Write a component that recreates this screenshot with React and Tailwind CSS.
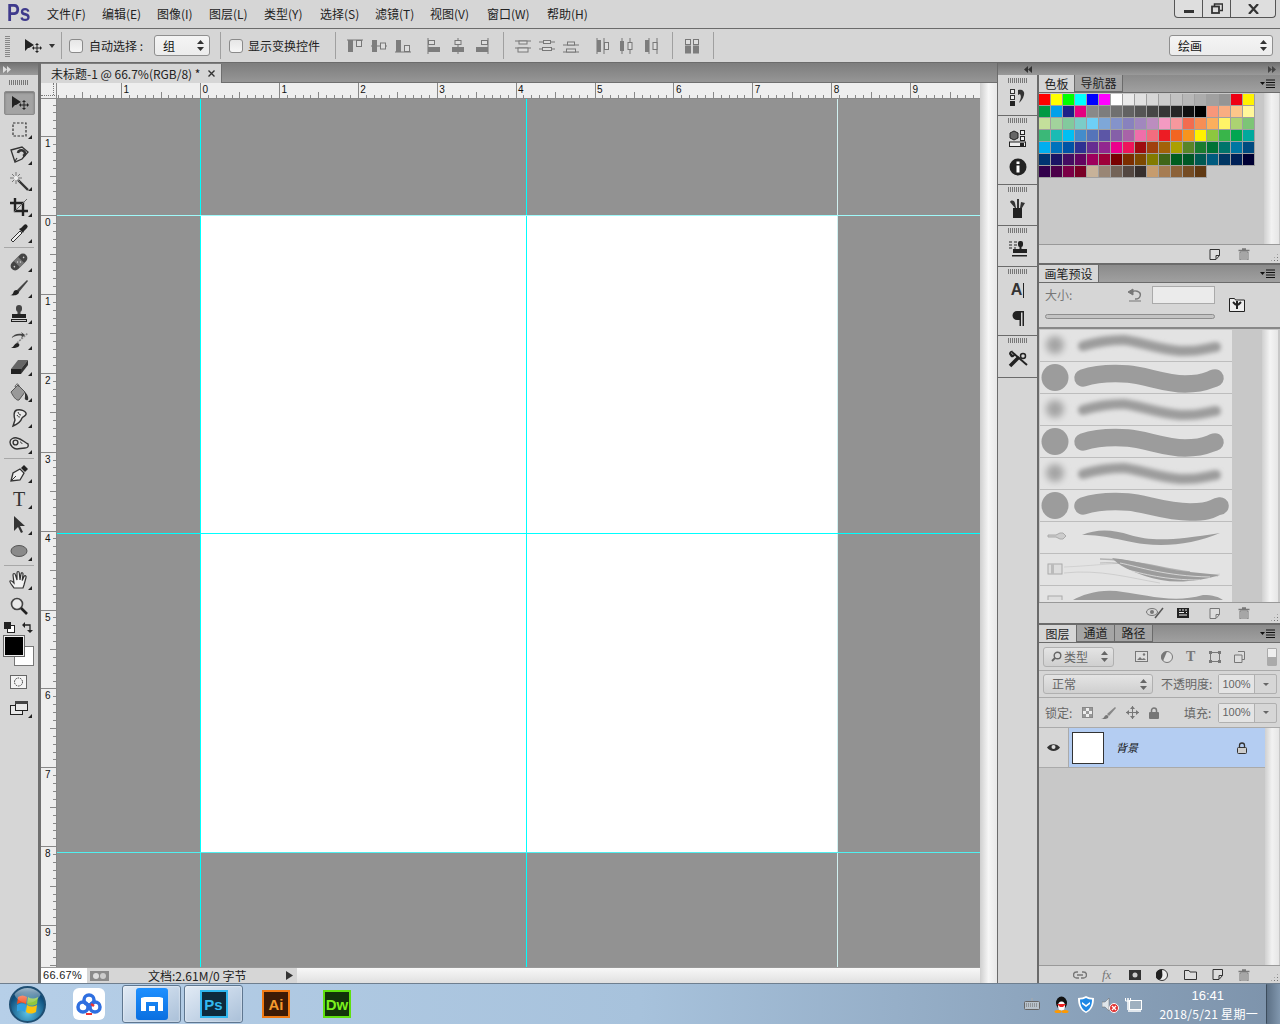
import React from "react";

const cjk = "font-['Noto_Sans_CJK_SC','Liberation_Sans',sans-serif]";

function Ico({ w = 22, h = 22, vb, className = "", children }) {
  return (
    <svg width={w} height={h} viewBox={vb || `0 0 ${w} ${h}`} className={"block shrink-0 " + className}>
      {children}
    </svg>
  );
}

const MoveIcon = () => (
  <Ico w={20} h={16}>
    <path d="M2 1v12l3-3 1 0 5-3z" fill="#222" />
    <path d="M14 6v8M10 10h8" stroke="#222" strokeWidth="1" />
    <path d="M14 5l-2 2h4zM14 15l-2-2h4zM9 10l2-2v4zM19 10l-2-2v4z" fill="#222" />
  </Ico>
);

const tools = {
  marquee: <rect x="5" y="5" width="13" height="13" fill="none" stroke="#333" strokeWidth="1.200" strokeDasharray="2.500 1.500" />,
  lasso: (
    <g fill="none" stroke="#333" strokeWidth="1.300">
      <path d="M3 6l11-3 6 5-6 7-7 3z" />
      <path d="M10 9a3.500 3 0 1 1 5 3" strokeWidth="2.600" />
      <path d="M7 17l2-3" strokeWidth="1.200" />
    </g>
  ),
  wand: (
    <g>
      <path d="M10 10l10 10" stroke="#333" strokeWidth="2.400" />
      <path d="M8 2v12M2 8h12M4 4l8 8M12 4l-8 8" stroke="#777" strokeWidth="1" />
      <circle cx="8" cy="8" r="2.200" fill="#eee" />
    </g>
  ),
  crop: (
    <g fill="none" stroke="#222" strokeWidth="2.400">
      <path d="M7 2v13h13" />
      <path d="M2 7h13v13" />
      <path d="M6 16L19 3" stroke="#666" strokeWidth="1" />
    </g>
  ),
  dropper: (
    <g>
      <path d="M4 19l-1-1 9-9 2 2-9 9z" fill="#eee" stroke="#333" strokeWidth="1" />
      <path d="M11 7l4 4 1-2 3-3a2 2 0 0 0-3-3l-3 3z" fill="#222" />
    </g>
  ),
  heal: (
    <g transform="rotate(-45 11 11)">
      <rect x="1" y="6.500" width="20" height="9" rx="4.500" fill="#444" />
      <rect x="8" y="6.500" width="6" height="9" fill="#777" />
      <circle cx="4.500" cy="11" r=".8" fill="#ccc" />
      <circle cx="17.500" cy="11" r=".8" fill="#ccc" />
      <circle cx="10" cy="10" r=".6" fill="#ddd" />
      <circle cx="12" cy="12" r=".6" fill="#ddd" />
    </g>
  ),
  brush: (
    <g>
      <path d="M9 13L19 3l1 1-9 11z" fill="#444" />
      <path d="M2 18c3 0 3-2 4-4 2-2 5-1 5 1 0 3-5 4-9 3z" fill="#222" />
    </g>
  ),
  stamp: (
    <g fill="#222">
      <rect x="8" y="2" width="6" height="7" rx="3" fill="#444" />
      <rect x="9.500" y="8" width="3" height="3" fill="#444" />
      <rect x="4" y="11" width="14" height="4" />
      <rect x="3" y="16" width="16" height="3" />
      <rect x="4" y="17" width="14" height="1" fill="#ccc" />
    </g>
  ),
  history: (
    <g>
      <path d="M9 14L20 4" stroke="#888" strokeWidth="1.500" strokeDasharray="2 1" />
      <path d="M3 9c3-4 7-5 11-4l-1-2 4 3-4 3 1-2c-4-1-7 0-11 2z" fill="#444" />
      <path d="M3 19c3-1 3-4 6-5 3 0 3 3 1 4-2 1-4 1-7 1z" fill="#222" />
    </g>
  ),
  eraser: (
    <g>
      <path d="M3 14l7-9h10l-7 9z" fill="#666" />
      <path d="M3 14h10v5H3z" fill="#222" />
      <path d="M13 14l7-9v5l-7 9z" fill="#333" />
    </g>
  ),
  bucket: (
    <g>
      <path d="M3 11l7-7 7 7-6 8c-3 1-6-4-8-8z" fill="#999" stroke="#555" strokeWidth="1" />
      <path d="M7 6c1-4 4-4 4 0" fill="none" stroke="#555" strokeWidth="1" />
      <path d="M17 11c2 2 4 5 3 8-2 1-4-1-3-3z" fill="#333" />
    </g>
  ),
  smudge: (
    <g fill="#e8e8e8" stroke="#333" strokeWidth="1.400">
      <path d="M5 19l2-6c-1-3-2-9 2-10 4-1 8 1 9 3 1 3-3 3-4 5-1 3-4 6-9 8z" />
      <path d="M10 5c1 2 1 3 3 3M9 8c1 2 2 2 3 2" fill="none" strokeWidth="1" />
    </g>
  ),
  dodge: (
    <g fill="none" stroke="#333" strokeWidth="1.400">
      <path d="M2 9c0-3 4-5 7-4 5 1 7 4 11 6 1 3-1 4-3 4-4 0-5 1-8 1-3 0-7-3-7-7z" fill="#e0e0e0" />
      <circle cx="7.500" cy="9.500" r="2.400" />
      <path d="M12 9c1 0 2 1 2 2" strokeWidth="1" />
    </g>
  ),
  pen: (
    <g>
      <path d="M3 19l2-8 7-4 4 4-4 7z" fill="#eee" stroke="#333" strokeWidth="1.300" />
      <path d="M3 19l5-5" stroke="#333" strokeWidth="1" />
      <path d="M13 6l3-3 4 4-3 3z" fill="#222" />
    </g>
  ),
  path: <path d="M6 2v15l4-4 3 6 2-1-3-6h5z" fill="#333" />,
  ellipse: <ellipse cx="11" cy="11" rx="8" ry="5.500" fill="#8a8a8a" stroke="#555" strokeWidth="1" />,
  hand: (
    <g fill="#f2f2f2" stroke="#333" strokeWidth="1.200">
      <path d="M6 19c-2-3-5-6-4-7s3 1 4 2L5 6c0-2 2-2 2.500 0L9 11 9 4c0-2 2-2 2.300 0l.7 7 1-6c.3-2 2.300-1.500 2 .5l-.8 6 1.800-4c1-1.500 2.500-.5 2 1L16 16l-1 3z" />
    </g>
  ),
  zoom: (
    <g>
      <circle cx="9" cy="9" r="5.500" fill="#e8e8e8" stroke="#444" strokeWidth="1.600" />
      <path d="M13 13l6 6" stroke="#222" strokeWidth="2.600" />
    </g>
  ),
};

function Corner() {
  return <span className="absolute right-[6px] bottom-[3px] w-0 h-0 border-l-[4px] border-l-transparent border-b-[4px] border-b-[#222]" />;
}

function Tool({ k, corner = true, children }) {
  return (
    <div className="relative h-[26px] w-[38px] flex items-center justify-center">
      {children || <Ico>{tools[k]}</Ico>}
      {corner && <Corner />}
    </div>
  );
}

const Sep = () => <div className="h-px w-[30px] bg-[#a8a8a8] mx-auto" />;

function Grip({ className = "" }) {
  return <div className={"w-[20px] h-[5px] bg-[repeating-linear-gradient(90deg,#777_0,#777_1px,transparent_1px,transparent_2px)] " + className} />;
}

function CollapseBar({ children, className = "" }) {
  return <div className={"h-[12px] bg-gradient-to-b from-[#737373] to-[#9a9a9a] flex items-center text-[#d8d8d8] " + className}>{children}</div>;
}

const Tri2 = ({ left, dark }) => (
  <svg width="8" height="7" viewBox="0 0 8 7" className="block">
    {left ? <path d="M4 0v7L0 3.500zM8 0v7L4 3.500z" fill="#333" /> : <path d="M0 0v7l4-3.500zM4 0v7l4-3.500z" fill={dark ? "#444" : "#ddd"} />}
  </svg>
);

function LeftTools() {
  return (
    <div className="w-[38px] shrink-0 bg-[#d6d6d6] flex flex-col">
      <CollapseBar className="pl-[3px]"><Tri2 /></CollapseBar>
      <div className="h-[15px] flex items-center justify-center"><Grip /></div>
      <div className="mx-[4px] w-[31px] h-[24px] mt-[1px] mb-px bg-[#a3a3a3] rounded-[2px] border border-[#8c8c8c] flex items-center justify-center shadow-[inset_0_1px_2px_#777]">
        <MoveIcon />
      </div>
      <div className="flex flex-col w-[38px]">
        <Tool k="marquee" />
        <Tool k="lasso" />
        <Tool k="wand" />
        <Tool k="crop" />
        <Tool k="dropper" />
        <div className="h-[3px] flex items-center"><Sep /></div>
        <Tool k="heal" />
        <Tool k="brush" />
        <Tool k="stamp" />
        <Tool k="history" />
        <Tool k="eraser" />
        <Tool k="bucket" />
        <Tool k="smudge" />
        <Tool k="dodge" />
        <div className="h-[3px] flex items-center"><Sep /></div>
        <Tool k="pen" />
        <Tool>
          <span className="font-['Liberation_Serif',serif] text-[20px] leading-none text-[#333]">T</span>
        </Tool>
        <Tool k="path" />
        <Tool k="ellipse" />
        <div className="h-[3px] flex items-center"><Sep /></div>
        <Tool k="hand" />
        <Tool k="zoom" corner={false} />
      </div>
      <div className="h-[16px] flex items-center justify-between pl-[4px] pr-[5px] w-[38px]">
        <svg width="11" height="11" viewBox="0 0 11 11" className="block"><rect x="3.500" y="3.500" width="7" height="7" fill="#fff" stroke="#222"/><rect x="0" y="0" width="7" height="7" fill="#222"/></svg>
        <svg width="11" height="11" viewBox="0 0 11 11" className="block"><path d="M1 3h7v6" fill="none" stroke="#222" strokeWidth="1.300"/><path d="M3 0v6L0 3zM5 8h6l-3 3z" fill="#222"/></svg>
      </div>
      <div className="relative h-[34px] w-[38px]">
        <div className="absolute left-[14px] top-[11px] w-[20px] h-[20px] bg-white border border-[#777]" />
        <div className="absolute left-[4px] top-[1px] w-[20px] h-[20px] bg-black border border-[#eee] outline outline-[#666]" />
      </div>
      <div className="h-[26px] w-[38px] flex items-center justify-center">
        <svg width="18" height="14" viewBox="0 0 18 14" className="block"><rect x=".5" y=".5" width="16" height="13" fill="#f4f4f4" stroke="#666"/><circle cx="8.500" cy="7" r="4" fill="none" stroke="#333" strokeDasharray="1.500 1"/></svg>
      </div>
      <Tool>
        <svg width="18" height="14" viewBox="0 0 18 14" className="block"><rect x=".5" y="4.500" width="12" height="9" fill="#e8e8e8" stroke="#222"/><rect x="5.500" y=".5" width="12" height="9" fill="#e8e8e8" stroke="#222"/><rect x="5" y="0" width="13" height="3" fill="#444"/></svg>
      </Tool>
    </div>
  );
}

const menus = ["文件(F)", "编辑(E)", "图像(I)", "图层(L)", "类型(Y)", "选择(S)", "滤镜(T)", "视图(V)", "窗口(W)", "帮助(H)"];
const menuX = [47, 55, 55, 52, 55, 56, 55, 55, 57, 60];

function MenuBar() {
  return (
    <div className="h-[29px] shrink-0 bg-[#d6d6d6] border-b border-[#6b6b6b] flex items-start relative">
      <div className="w-[47px] shrink-0 pl-[7px] pt-[1px]">
        <span className="inline-block origin-left scale-x-[.8] font-['Liberation_Sans',sans-serif] font-bold text-[24px] leading-[24px] text-[#3f3a8c]">Ps</span>
      </div>
      <div className="flex h-[28px] items-center">
        {menus.map((m, i) => (
          <span key={m} className="text-[12px] text-[#222] whitespace-nowrap" style={{ width: i < 9 ? menuX[i + 1] : 50 }}>{m}</span>
        ))}
      </div>
      <div className="ml-auto mr-[4px] flex h-[18px] w-[102px] border-l border-r border-b border-[#555] rounded-b-[4px] bg-[#dedede]">
        <div className="w-[28px] flex items-center justify-center border-r border-[#555]"><div className="w-[10px] h-[3px] bg-[#333] mt-[6px]" /></div>
        <div className="w-[28px] flex items-center justify-center border-r border-[#555]">
          <svg width="12" height="11" viewBox="0 0 12 11" className="block"><path d="M3.500 3V.9h8v6.500H9" fill="none" stroke="#333" strokeWidth="1.500"/><rect x="1" y="3.500" width="7" height="6.500" fill="none" stroke="#333" strokeWidth="1.800"/></svg>
        </div>
        <div className="flex-1 flex items-center justify-center">
          <svg width="11" height="10" viewBox="0 0 11 10" className="block"><path d="M1 0l9 10M10 0L1 10" stroke="#333" strokeWidth="2.200"/></svg>
        </div>
      </div>
    </div>
  );
}

function OptCheck({ className = "" }) {
  return <span className={"block w-[14px] h-[14px] shrink-0 rounded-[3px] border border-[#8a8a8a] bg-gradient-to-b from-[#e6e6e6] to-[#f6f6f6] " + className} />;
}

const UpDown = ({ c = "#333" }) => (
  <svg width="7" height="11" viewBox="0 0 7 11" className="block shrink-0"><path d="M3.500 0L7 4H0zM3.500 11L0 7h7z" fill={c}/></svg>
);

const OSep = ({ className = "" }) => <div className={"w-px h-[27px] bg-[#a0a0a0] shrink-0 " + className} />;

function Align({ v }) {
  const g = "#7d7d7d";
  const L = "#777";
  const map = {
    t: <g><path d="M1 2h16" stroke={L}/><rect x="2" y="2" width="5" height="12" fill={g}/><rect x="10.500" y="2.500" width="5" height="6" fill="#ddd" stroke={L}/></g>,
    c: <g><path d="M1 8h16" stroke={L}/><rect x="2" y="2" width="5" height="12" fill={g}/><rect x="10.500" y="5" width="5" height="6" fill="#ddd" stroke={L}/></g>,
    b: <g><path d="M1 14h16" stroke={L}/><rect x="2" y="2" width="5" height="12" fill={g}/><rect x="10.500" y="7.500" width="5" height="6" fill="#ddd" stroke={L}/></g>,
    l: <g><path d="M3 0v16" stroke={L}/><rect x="3" y="9" width="12" height="5" fill={g}/><rect x="3.500" y="2.500" width="6" height="4" fill="#ddd" stroke={L}/></g>,
    m: <g><path d="M9 0v16" stroke={L}/><rect x="3" y="9" width="12" height="5" fill={g}/><rect x="6" y="2.500" width="6" height="4" fill="#ddd" stroke={L}/></g>,
    r: <g><path d="M15 0v16" stroke={L}/><rect x="3" y="9" width="12" height="5" fill={g}/><rect x="8.500" y="2.500" width="6" height="4" fill="#ddd" stroke={L}/></g>,
    dt: <g><path d="M1 3h16M1 10h16" stroke={L}/><rect x="5" y="3" width="8" height="3" fill="#ddd" stroke={L}/><rect x="4" y="10" width="10" height="4" fill="#ddd" stroke={L}/></g>,
    dc: <g><path d="M1 4h16M1 11h16" stroke={L}/><rect x="5.500" y="2.500" width="7" height="3" fill="#ddd" stroke={L}/><rect x="4.500" y="9.500" width="9" height="3" fill="#ddd" stroke={L}/></g>,
    db: <g><path d="M1 7h16M1 14h16" stroke={L}/><rect x="5.500" y="4" width="7" height="3" fill="#ddd" stroke={L}/><rect x="4.500" y="11" width="9" height="3" fill="#ddd" stroke={L}/></g>,
    hl: <g><path d="M3 0v16M10 0v16" stroke={L}/><rect x="3" y="2" width="4" height="12" fill={g}/><rect x="10.500" y="4.500" width="4" height="7" fill="#ddd" stroke={L}/></g>,
    hc: <g><path d="M4 0v16M12 0v16" stroke={L}/><rect x="2" y="3" width="4" height="10" fill={g}/><rect x="10" y="4.500" width="4" height="7" fill="#ddd" stroke={L}/></g>,
    hr: <g><path d="M7 0v16M15 0v16" stroke={L}/><rect x="3" y="2" width="4" height="12" fill={g}/><rect x="11" y="4.500" width="4" height="7" fill="#ddd" stroke={L}/></g>,
    auto: <g><rect x="2.500" y="1.500" width="5" height="5" fill="#ddd" stroke={L}/><rect x="10.500" y="1.500" width="5" height="5" fill="#ddd" stroke={L}/><rect x="2" y="7.500" width="6" height="8" fill={g}/><rect x="10" y="7.500" width="6" height="8" fill={g}/></g>,
  };
  return <svg width="18" height="16" viewBox="0 0 18 16" className="block shrink-0">{map[v]}</svg>;
}

function AGroup({ items, className = "" }) {
  return (
    <div className={"flex gap-[6px] " + className}>
      {items.map((a) => <Align key={a} v={a} />)}
    </div>
  );
}

function OptSelect({ w, text }) {
  return (
    <div className={`h-[21px] rounded-[3px] border border-[#8f8f8f] bg-gradient-to-b from-[#f4f4f4] to-[#ececec] flex items-center justify-between pl-[8px] pr-[5px] text-[12px] text-[#111] shrink-0 ${w}`}>
      <span>{text}</span>
      <UpDown />
    </div>
  );
}

function OptionsBar() {
  return (
    <div className="h-[34px] shrink-0 bg-[#d6d6d6] border-b border-[#6b6b6b] flex items-center text-[12px] text-[#222]">
      <div className="ml-[5px] w-[5px] h-[22px] bg-[repeating-linear-gradient(0deg,#888_0,#888_1px,transparent_1px,transparent_2px)]" />
      <div className="ml-[13px]"><MoveIcon /></div>
      <svg width="6" height="4" viewBox="0 0 6 4" className="block ml-[6px]"><path d="M0 0h6L3 4z" fill="#333"/></svg>
      <OSep className="ml-[6px]" />
      <OptCheck className="ml-[7px]" />
      <span className="ml-[6px] w-[65px] whitespace-nowrap">自动选择 :</span>
      <OptSelect w="w-[56px]" text="组" />
      <OSep className="ml-[10px]" />
      <OptCheck className="ml-[8px]" />
      <span className="ml-[5px] w-[72px] whitespace-nowrap">显示变换控件</span>
      <OSep className="ml-[15px]" />
      <AGroup className="ml-[10px]" items={["t", "c", "b"]} />
      <AGroup className="ml-[13px]" items={["l", "m", "r"]} />
      <OSep className="ml-[12px]" />
      <AGroup className="ml-[10px]" items={["dt", "dc", "db"]} />
      <AGroup className="ml-[14px]" items={["hl", "hc", "hr"]} />
      <OSep className="ml-[12px]" />
      <span className="ml-[10px]"><Align v="auto" /></span>
      <OSep className="ml-[12px]" />
      <div className="ml-auto mr-[7px]"><OptSelect w="w-[104px]" text="绘画" /></div>
    </div>
  );
}

const labelsH = [-1, 0, 1, 2, 3, 4, 5, 6, 7, 8, 9];
const PITCH = 78.9;

function RulerTop() {
  const W = 923;
  const zero = 143;
  const ticks = [];
  for (let n = -18; n * PITCH / 10 + zero < W; n++) ticks.push(n);
  return (
    <svg width={W} height="15" viewBox={`0 0 ${W} 15`} className="block">
      {ticks.map((n) => {
        const x = zero + (n * PITCH) / 10;
        const maj = n % 10 === 0;
        const mid = n % 5 === 0;
        return <path key={n} d={`M${Math.round(x) + .5} ${maj ? 0 : mid ? 9 : 12}V15`} stroke="#888" />;
      })}
      {labelsH.map((n) => (
        <text key={n} x={zero + n * PITCH + 2.5} y="10" fontSize="10" fontFamily="Liberation Sans, sans-serif" fill="#111">{Math.abs(n)}</text>
      ))}
    </svg>
  );
}

function RulerLeft() {
  const H = 868;
  const zero = 116;
  const ticks = [];
  for (let n = -14; n * PITCH / 10 + zero < H; n++) ticks.push(n);
  return (
    <svg width="15" height={H} viewBox={`0 0 15 ${H}`} className="block">
      {ticks.map((n) => {
        const y = zero + (n * PITCH) / 10;
        const maj = n % 10 === 0;
        const mid = n % 5 === 0;
        return <path key={n} d={`M${maj ? 0 : mid ? 9 : 12} ${Math.round(y) + .5}H15`} stroke="#888" />;
      })}
      {labelsH.map((n) => (
        <text key={n} x="4" y={zero + n * PITCH + 11} fontSize="10" fontFamily="Liberation Sans, sans-serif" fill="#111">{Math.abs(n)}</text>
      ))}
    </svg>
  );
}

function Doc() {
  return (
    <div className="w-[956px] shrink-0 flex flex-col">
      <div className="h-[20px] shrink-0 bg-gradient-to-b from-[#7d7d7d] to-[#969696] border-b border-[#6f6f6f]">
        <div className="h-[19px] w-[181px] mt-px bg-[#d6d6d6] flex items-center justify-between pl-[10px] pr-[6px] text-[12px] text-[#222] whitespace-nowrap border-r border-[#6f6f6f]">
          <span>未标题-1 @ 66.7%(RGB/8) *</span>
          <svg width="7" height="7" viewBox="0 0 7 7" className="block"><path d="M.5.5l6 6M6.500.5l-6 6" stroke="#333" strokeWidth="1.400"/></svg>
        </div>
      </div>
      <div className="flex flex-1 min-h-0">
        <div className="w-[939px] flex flex-col">
          <div className="h-[16px] shrink-0 flex bg-[#eeeeee] border-b border-[#888]">
            <div className="w-[16px] shrink-0 border-r border-[#888] relative">
              <div className="absolute left-[12px] top-0 h-[12px] w-0 border-l border-dotted border-[#777]" />
              <div className="absolute left-0 top-[12px] w-[16px] h-0 border-t border-dotted border-[#777]" />
            </div>
            <RulerTop />
          </div>
          <div className="flex-1 flex min-h-0">
            <div className="w-[16px] shrink-0 bg-[#eeeeee] border-r border-[#888] overflow-hidden">
              <RulerLeft />
            </div>
            <div className="relative flex-1 bg-[#929292] overflow-hidden">
              <div className="ml-[144px] mt-[117px] w-[636px] h-[636px] bg-white" />
              <div className="absolute left-[143px] top-0 bottom-0 w-px bg-[#00ffff]" />
              <div className="absolute left-[469px] top-0 bottom-0 w-px bg-[#00ffff]" />
              <div className="absolute left-[780px] top-0 bottom-0 w-px bg-[#d0f0f0]" />
              <div className="absolute top-[116px] left-0 right-0 h-px bg-[#a0fafa]" />
              <div className="absolute top-[434px] left-0 right-0 h-px bg-[#00ffff]" />
              <div className="absolute top-[753px] left-0 right-0 h-px bg-[#50f0f0]" />
            </div>
          </div>
          <div className="h-[16px] shrink-0 flex items-center bg-[#d6d6d6] text-[12px] text-[#222] border-t border-[#999]">
            <div className="w-[46px] h-full bg-white flex items-center pl-[2px] font-['Liberation_Sans',sans-serif] text-[11px] tracking-[.3px]">66.67%</div>
            <div className="ml-[3px] w-[19px] h-[10px] bg-[#8a8a8a] flex items-center justify-center gap-px">
              <span className="block w-[6px] h-[6px] rounded-full bg-[#ddd]" />
              <span className="block w-[6px] h-[6px] rounded-full bg-[#ccc]" />
            </div>
            <span className="ml-[39px] w-[137px] whitespace-nowrap">文档:2.61M/0 字节</span>
            <svg width="7" height="9" viewBox="0 0 7 9" className="block ml-[1px]"><path d="M0 0l7 4.500L0 9z" fill="#333"/></svg>
            <div className="ml-[4px] flex-1 h-full bg-gradient-to-b from-[#f8f8f8] to-[#e0e0e0]" />
          </div>
        </div>
        <div className="w-[17px] bg-gradient-to-r from-[#cfcfcf] via-[#f6f6f6] to-[#e8e8e8]" />
      </div>
    </div>
  );
}

function IconGroup({ children, gripClass = "mb-[1px]", pad = "pb-[3px]" }) {
  return (
    <div className={"border-b border-[#6b6b6b] flex flex-col items-center pt-[2px] " + pad}>
      <Grip className={gripClass} />
      {children}
    </div>
  );
}

function IconSlot({ children, className = "" }) {
  return <div className={"h-[28px] w-full flex items-center justify-center " + className}>{children}</div>;
}

function IconColumn() {
  return (
    <div className="w-[41px] shrink-0 bg-[#d6d6d6] border-r-[2px] border-[#6b6b6b] flex flex-col pt-px">
      <IconGroup>
        <IconSlot>
          <svg width="16" height="18" viewBox="0 0 16 18" className="block"><rect x=".5" y=".5" width="4" height="4" fill="#eee" stroke="#333"/><rect x=".5" y="6.500" width="4" height="4" fill="#eee" stroke="#333"/><rect x="0" y="12" width="5" height="5" fill="#222"/><path d="M8 1c4-1 7 1 6 5-1 4-3 6-5 8 1-3 3-6 1-9l-2 1z" fill="#333"/></svg>
        </IconSlot>
      </IconGroup>
      <IconGroup>
        <IconSlot>
          <svg width="17" height="17" viewBox="0 0 17 17" className="block"><path d="M1 3l4-2 4 2v5l-4 2-4-2z" fill="#666" stroke="#222"/><rect x="11.500" y=".5" width="4" height="4" fill="#eee" stroke="#222"/><rect x="11.500" y="6.500" width="4" height="4" fill="#eee" stroke="#222"/><rect x=".5" y="12" width="16" height="4.500" fill="#eee" stroke="#222"/><rect x="11" y="13" width="4" height="3" fill="#222"/></svg>
        </IconSlot>
        <IconSlot className="mt-px">
          <svg width="18" height="18" viewBox="0 0 18 18" className="block"><circle cx="9" cy="9" r="8.500" fill="#222"/><rect x="7.500" y="7.500" width="3" height="7" fill="#fff"/><rect x="7.500" y="3.500" width="3" height="2.500" fill="#fff"/></svg>
        </IconSlot>
      </IconGroup>
      <IconGroup gripClass="mb-[2px]">
        <IconSlot>
          <svg width="17" height="19" viewBox="0 0 17 19" className="block"><rect x="4" y="9" width="9" height="10" fill="#222"/><path d="M6 9L1 3c1-2 4-2 5 1l1 5zM8 9V0h2v9zM11 9l1-6 4 1-3 5z" fill="#333"/></svg>
        </IconSlot>
      </IconGroup>
      <IconGroup gripClass="mb-[2px]">
        <IconSlot>
          <svg width="18" height="16" viewBox="0 0 18 16" className="block"><path d="M0 1h3M0 4h3M0 7h3M5 1h3M5 4h3M5 7h2" stroke="#222"/><rect x="9" y="0" width="5" height="6" rx="2" fill="#222"/><rect x="10.500" y="5" width="2" height="4" fill="#222"/><rect x="4" y="8" width="14" height="4" fill="#222"/><rect x="3" y="14" width="15" height="1.500" fill="#222"/></svg>
        </IconSlot>
      </IconGroup>
      <IconGroup gripClass="mb-[2px]">
        <IconSlot>
          <div className="flex items-center">
            <span className="font-['Liberation_Sans',sans-serif] font-bold text-[16px] leading-none text-[#333]">A</span>
            <span className="w-px h-[15px] bg-[#222] ml-px" />
          </div>
        </IconSlot>
        <IconSlot>
          <svg width="12" height="15" viewBox="0 0 12 15" className="block"><path d="M5 0h7v15h-1.500V1.500H9V15H7.500V9H5A4.500 4.500 0 0 1 5 0z" fill="#222"/></svg>
        </IconSlot>
      </IconGroup>
      <IconGroup gripClass="mb-[2px]" pad="pb-[4px]">
        <IconSlot>
          <svg width="20" height="18" viewBox="0 0 20 18" className="block"><path d="M2 16L11 7" stroke="#222" strokeWidth="3.500"/><path d="M4 2l15 13" stroke="#222" strokeWidth="2"/><path d="M1 4c0-2 2-4 4-3L3 3l2 2 2-2c1 3-2 5-4 4z" fill="#222"/><circle cx="15" cy="6" r="2.500" fill="none" stroke="#222" strokeWidth="1.500"/></svg>
        </IconSlot>
      </IconGroup>
    </div>
  );
}

const swatches = [
  ["#ff0000","#ffff00","#00ff00","#00ffff","#0000ff","#ff00ff","#ffffff","#ebebeb","#e1e1e1","#d7d7d7","#cccccc","#c2c2c2","#b7b7b7","#acacac","#a0a0a0","#959595","#ee0014","#fff200"],
  ["#009944","#00a0e9","#1d2088","#e4007f","#898989","#7d7d7d","#707070","#626262","#555555","#464646","#363636","#262626","#111111","#000000","#f7977a","#f9ad81","#fdc68a","#fff79a"],
  ["#c4df9b","#a2d39c","#82ca9d","#7bcdc8","#6ecff6","#7ea7d8","#8493ca","#8882be","#a187be","#bc8dbf","#f49ac2","#f6989d","#f26c4f","#f68e55","#fbaf5c","#fff467","#acd372","#7cc576"],
  ["#3bb878","#1abbb4","#00bff3","#438ccb","#5574b9","#5c56a6","#8560a8","#a863a8","#f06eaa","#f26d7e","#ed1c24","#f26522","#f7941d","#fff200","#8dc73f","#39b54a","#00a651","#00a99d"],
  ["#00aeef","#0072bc","#0054a6","#2e3192","#662d91","#92278f","#ec008c","#ed145b","#9e0b0f","#a0410d","#a36209","#aba000","#598527","#1a7b30","#007236","#00746b","#0076a3","#004b80"],
  ["#003471","#1b1464","#440e62","#630460","#9e005d","#9e0039","#790000","#7b2e00","#7d4900","#827b00","#406618","#005e20","#005826","#005952","#005b7f","#003663","#002157","#000033"],
  ["#32004b","#4b0049","#7b0046","#7a0026","#c7b299","#998675","#736357","#534741","#362f2d","#c69c6e","#a67c52","#8c6239","#754c24","#603913"],
];

function Tab({ children, active, w }) {
  return (
    <div className={`h-full ${w} shrink-0 flex items-center justify-center text-[12px] whitespace-nowrap border-r border-[#6b6b6b] ${active ? "bg-[#d6d6d6] text-[#222]" : "bg-[#a5a5a5] text-[#222] border-b"}`}>
      {children}
    </div>
  );
}

const PanelMenu = () => (
  <svg width="16" height="9" viewBox="0 0 16 9" className="block mr-[4px]"><path d="M0 3h5L2.500 6z" fill="#111"/><path d="M6 1h9M6 3.500h9M6 6h9M6 8.500h9" stroke="#111"/></svg>
);

function TabRow({ children }) {
  return (
    <div className="h-[18px] shrink-0 bg-gradient-to-b from-[#8b8b8b] to-[#a0a0a0] flex items-stretch border-b border-[#6b6b6b]">
      {children}
      <div className="ml-auto flex items-center"><PanelMenu /></div>
    </div>
  );
}

const Trash = ({ c = "#777" }) => (
  <svg width="12" height="12" viewBox="0 0 12 12" className="block"><path d="M4 1h4M0.500 2.500h11" stroke={c} strokeWidth="1.300"/><path d="M2 4h8v8H2zM4 5v6M6 5v6M8 5v6" fill="none" stroke={c}/></svg>
);
const NewDoc = ({ c = "#333" }) => (
  <svg width="11" height="11" viewBox="0 0 11 11" className="block"><path d="M1 .5h9.500v6L7 10.500H1z" fill="#ddd" stroke={c}/><path d="M7 10V6.500h3.500" fill="none" stroke={c} strokeWidth="1"/></svg>
);
const Resize = () => (
  <div className="absolute right-[1px] bottom-[1px] w-[9px] h-[9px] bg-[radial-gradient(#777_0.6px,transparent_0.7px)] bg-[length:3px_3px] [clip-path:polygon(100%_0,100%_100%,0_100%)]" />
);

function ColorPanel() {
  return (
    <div className="h-[190px] shrink-0 flex flex-col border-b-[2px] border-[#6b6b6b]">
      <TabRow>
        <Tab active w="w-[36px]">色板</Tab>
        <Tab w="w-[48px]">导航器</Tab>
      </TabRow>
      <div className="flex-1 flex bg-[#c8c8c8] min-h-0">
        <div className="flex-1 pt-px">
          {swatches.map((row, r) => (
            <div key={r} className="flex">
              {row.map((c, i) => (
                <div key={i} className="w-[12px] h-[12px] border-r border-b border-[#a0a0a0]" style={{ background: c }} />
              ))}
            </div>
          ))}
        </div>
        <div className="w-[15px] mr-[1px] bg-gradient-to-r from-[#d0d0d0] via-[#f2f2f2] to-[#e6e6e6]" />
      </div>
      <div className="relative h-[19px] shrink-0 bg-[#d6d6d6] border-t border-[#999] flex items-center justify-end pr-[30px] gap-[18px]">
        <NewDoc />
        <Trash />
        <Resize />
      </div>
    </div>
  );
}

function Soft({ small, long }) {
  const d = long
    ? "M43 16C58 11 72 11 88 12S125 22 150 22 172 17 180 16"
    : "M43 16C58 11 72 11 88 12S125 22 145 22 168 18 175 16";
  const dSoft = "M43 16C60 11 72 10 83 10S120 20 140 21 165 18 176 17";
  return (
    <svg width="192" height="31" viewBox="0 0 192 31" className="block">
      <defs>
        <filter id="softA" x="-80%" y="-80%" width="260%" height="260%"><feGaussianBlur stdDeviation="3.500" /></filter>
        <filter id="softB" x="-10%" y="-80%" width="120%" height="260%"><feGaussianBlur stdDeviation="2" /></filter>
      </defs>
      {small ? (
        <g>
          <circle cx="15" cy="15" r="9" fill="#a4a4a4" filter="url(#softA)" />
          <path d={dSoft} fill="none" stroke="#9c9c9c" strokeWidth="10" strokeLinecap="round" filter="url(#softB)" />
        </g>
      ) : (
        <g fill="#9c9c9c">
          <circle cx="15" cy="15.500" r="13.500" />
          <path d={d} fill="none" stroke="#9c9c9c" strokeWidth="17.500" strokeLinecap="round" />
        </g>
      )}
    </svg>
  );
}

const bristles = [
  ["M24 13C70 11 96 5 120 13S160 23 180 20", 1, .25],
  ["M24 19C60 15 90 24 120 29", 1, .3],
  ["M60 5C90 5 120 14 150 18", 1.500, .7],
  ["M60 9C90 7 120 18 178 22", 1, .6],
];

function BrushPanel() {
  return (
    <div className="h-[360px] shrink-0 flex flex-col border-b-[2px] border-[#6b6b6b]">
      <TabRow>
        <Tab active w="w-[60px]">画笔预设</Tab>
      </TabRow>
      <div className="h-[46px] shrink-0 bg-[#d6d6d6] border-b-[2px] border-[#888] relative flex">
        <div className="w-[176px] pl-[6px] pt-[2px]">
          <div className="flex items-center h-[20px] text-[12px] text-[#777]">
            <span className="w-[83px]">大小:</span>
            <svg width="14" height="14" viewBox="0 0 14 14" className="block"><path d="M3 5a5 4 0 1 1 4 6" fill="none" stroke="#777" strokeWidth="1.400"/><path d="M0 4l5-3v6zM1 13h12" stroke="#777" fill="#777"/></svg>
            <div className="ml-[10px] w-[63px] h-[18px] bg-[#ebebeb] border border-[#aaa]" />
          </div>
          <div className="mt-[9px] h-[5px] rounded-full bg-[#c4c4c4] border border-[#8d8d8d]" />
        </div>
        <div className="ml-[14px] mt-[14px]">
          <svg width="16" height="15" viewBox="0 0 16 15" className="block"><path d="M.5 1.500h5l1 1.500h9v11.500H.5z" fill="#eee" stroke="#222"/><path d="M8 7v5M4 5l3 3M12 5L9 8M8 4v3" stroke="#222" strokeWidth="2"/></svg>
        </div>
      </div>
      <div className="flex-1 bg-[#c8c8c8] flex min-h-0 pt-px">
        <div className="w-[192px] ml-px overflow-hidden flex flex-col">
          {[0, 1, 2, 3, 4, 5].map((i) => (
            <div key={i} className="h-[32px] shrink-0 bg-[#e3e3e3] border-b border-[#bdbdbd]">
              <Soft small={i % 2 === 0} long={i === 5} />
            </div>
          ))}
          <div className="h-[32px] shrink-0 bg-[#e3e3e3] border-b border-[#bdbdbd] flex items-center">
            <svg width="192" height="31" viewBox="0 0 192 31" className="block">
              <path d="M8 13h8l4-2h3l3 3-3 3h-3l-4-2H8z" fill="#ccc" stroke="#aaa" />
              <path d="M42 13c14-6 30-6 48 0 20 6 42 6 90-2-24 10-50 14-76 11-24-3-36-9-62-9z" fill="#9c9c9c" />
            </svg>
          </div>
          <div className="h-[32px] shrink-0 bg-[#e3e3e3] border-b border-[#bdbdbd] flex items-center">
            <svg width="192" height="31" viewBox="0 0 192 31" className="block">
              <rect x="8" y="10" width="14" height="10" fill="#ddd" stroke="#aaa" />
              <rect x="11" y="10" width="3" height="10" fill="#bbb" />
              <path d="M72 4C100 7 120 15 150 18L180 21C150 30 125 29 105 22 90 17 78 11 72 4z" fill="#9c9c9c" />
              <g fill="none">
                {bristles.map(([d, w, o], i) => <path key={i} d={d} stroke="#9c9c9c" strokeWidth={w} opacity={o} />)}
                <path d="M80 9C100 13 125 22 170 23" stroke="#e3e3e3" strokeWidth=".8" />
                <path d="M84 15C104 20 125 26 160 26" stroke="#e3e3e3" strokeWidth=".8" />
              </g>
            </svg>
          </div>
          <div className="h-[16px] shrink-0 bg-[#e3e3e3] overflow-hidden">
            <svg width="192" height="14" viewBox="0 0 192 14" className="block">
              <rect x="8" y="10" width="14" height="6" fill="#ddd" stroke="#aaa" />
              <path d="M33 14c10-6 30-12 50-8 20 2 50 12 80 3 10 0 16 2 20 5z" fill="#9c9c9c" />
            </svg>
          </div>
        </div>
        <div className="flex-1" />
        <div className="w-[16px] mr-[2px] bg-gradient-to-r from-[#d0d0d0] via-[#f4f4f4] to-[#e6e6e6]" />
      </div>
      <div className="relative h-[21px] shrink-0 bg-[#d6d6d6] border-t border-[#999] flex items-center justify-end pr-[30px]">
        <svg width="18" height="12" viewBox="0 0 18 12" className="block mr-[13px]"><ellipse cx="6" cy="5" rx="5.500" ry="3.500" fill="none" stroke="#777"/><circle cx="6" cy="5" r="2" fill="#777"/><path d="M9 11l8-10" stroke="#555" strokeWidth="1.500"/></svg>
        <svg width="12" height="10" viewBox="0 0 12 10" className="block mr-[20px]"><rect width="12" height="10" fill="#222"/><path d="M2 2h2M5 2h2M8 2h2M2 4.500h5M9 4.500h1M2 7h8" stroke="#eee"/></svg>
        <NewDoc c="#777" />
        <span className="ml-[18px]"><Trash /></span>
        <Resize />
      </div>
    </div>
  );
}

function Field({ children, className = "" }) {
  return <div className={"rounded-[3px] border border-[#b0b0b0] bg-gradient-to-b from-[#e4e4e4] to-[#cfcfcf] flex items-center text-[12px] text-[#666] " + className}>{children}</div>;
}

function Percent() {
  return (
    <div className="flex h-[20px] border border-[#b0b0b0] rounded-[2px] bg-[#d6d6d6] text-[12px] text-[#666]">
      <div className="w-[35px] bg-[#e4e4e4] flex items-center justify-center font-['Liberation_Sans',sans-serif] text-[11px]">100%</div>
      <div className="border-l border-[#b0b0b0] w-[22px] flex items-center justify-center">
        <svg width="6" height="3" viewBox="0 0 6 3" className="block"><path d="M0 0h6L3 3z" fill="#666"/></svg>
      </div>
    </div>
  );
}

function LayersPanel() {
  return (
    <div className="flex-1 flex flex-col min-h-0">
      <TabRow>
        <Tab active w="w-[38px]">图层</Tab>
        <Tab w="w-[38px]">通道</Tab>
        <Tab w="w-[38px]">路径</Tab>
      </TabRow>
      <div className="h-[28px] shrink-0 bg-[#d6d6d6] border-b border-[#aaa] flex items-center pl-[4px]">
        <Field className="w-[71px] h-[20px] pl-[7px] pr-[5px] justify-between">
          <span className="flex items-center gap-[2px]">
            <svg width="11" height="11" viewBox="0 0 11 11" className="block"><circle cx="6.500" cy="4.500" r="3.300" fill="none" stroke="#666" strokeWidth="1.400"/><path d="M4 7l-3 3" stroke="#666" strokeWidth="1.800"/></svg>
            类型
          </span>
          <UpDown c="#666" />
        </Field>
        <div className="ml-[21px] flex items-center gap-[13px]">
          <svg width="13" height="11" viewBox="0 0 13 11" className="block"><rect x=".5" y=".5" width="12" height="10" fill="#ddd" stroke="#777"/><path d="M2 9l3-3 2 2 2-1 2 2z" fill="#777"/><circle cx="9" cy="3.500" r="1.200" fill="#777"/></svg>
          <svg width="12" height="12" viewBox="0 0 12 12" className="block"><circle cx="6" cy="6" r="5.500" fill="#e0e0e0" stroke="#777"/><path d="M6 .5A5.500 5.500 0 0 0 2 10z" fill="#777"/></svg>
          <span className="font-['Liberation_Serif',serif] font-bold text-[14px] leading-none text-[#777] w-[10px]">T</span>
          <svg width="12" height="12" viewBox="0 0 12 12" className="block"><rect x="1.500" y="1.500" width="9" height="9" fill="none" stroke="#777"/><path d="M0 0h3v3H0zM9 0h3v3H9zM0 9h3v3H0zM9 9h3v3H9z" fill="#777"/></svg>
          <svg width="11" height="12" viewBox="0 0 11 12" className="block"><path d="M4 .5h6.500v8H8M.5 4h7.500v7.500H.5z" fill="#ddd" stroke="#777"/></svg>
        </div>
        <div className="ml-auto mr-[3px] flex flex-col w-[10px] h-[18px] rounded-[1px] overflow-hidden border border-[#aaa]">
          <div className="h-1/2 bg-[#eee]" />
          <div className="h-1/2 bg-[#aaa]" />
        </div>
      </div>
      <div className="h-[27px] shrink-0 bg-[#d6d6d6] border-b border-[#aaa] flex items-center pl-[4px] text-[12px] text-[#666]">
        <Field className="w-[110px] h-[20px] pl-[8px] pr-[5px] justify-between">
          <span>正常</span>
          <UpDown c="#666" />
        </Field>
        <span className="ml-[8px] whitespace-nowrap w-[57px]">不透明度:</span>
        <Percent />
      </div>
      <div className="h-[30px] shrink-0 bg-[#d6d6d6] border-b border-[#aaa] flex items-center pl-[6px] text-[12px] text-[#666]">
        <span className="w-[37px] whitespace-nowrap">锁定:</span>
        <svg width="11" height="11" viewBox="0 0 11 11" className="block"><rect x=".5" y=".5" width="10" height="10" fill="#eee" stroke="#888"/><path d="M1 1h3v3H1zM7 1h3v3H7zM4 4h3v3H4zM1 7h3v3H1zM7 7h3v3H7z" fill="#999"/></svg>
        <svg width="16" height="13" viewBox="0 0 16 13" className="block ml-[8px]"><path d="M6 8l8-7 1 1-7 8z" fill="#888"/><path d="M0 13c3 0 3-3 5-4 2 0 3 1 2 3-1 1-4 1-7 1z" fill="#777"/></svg>
        <svg width="13" height="13" viewBox="0 0 13 13" className="block ml-[9px]"><path d="M6.500 0v13M0 6.500h13" stroke="#777"/><path d="M6.500 0l-2.500 3h5zM6.500 13l-2.500-3h5zM0 6.500l3-2.500v5zM13 6.500l-3-2.500v5z" fill="#777"/></svg>
        <svg width="10" height="12" viewBox="0 0 10 12" className="block ml-[10px]"><path d="M2.500 5V3.500a2.500 2.500 0 0 1 5 0V5" fill="none" stroke="#777" strokeWidth="1.500"/><rect x="0" y="5" width="10" height="7" rx="1" fill="#777"/></svg>
        <span className="ml-[25px] w-[34px] whitespace-nowrap">填充:</span>
        <Percent />
      </div>
      <div className="flex-1 bg-[#c8c8c8] flex min-h-0">
        <div className="w-[226px]">
          <div className="h-[40px] flex border-b border-[#aaa]">
            <div className="w-[30px] bg-[#d6d6d6] border-r border-[#aaa] flex items-center justify-center">
              <svg width="13" height="9" viewBox="0 0 13 9" className="block"><path d="M0 4.500C3 0 10 0 13 4.500 10 9 3 9 0 4.500z" fill="#333"/><circle cx="6.500" cy="4" r="2" fill="#ddd"/></svg>
            </div>
            <div className="flex-1 bg-[#b4cdf2] flex items-center pl-[3px] pr-[18px]">
              <div className="w-[32px] h-[32px] bg-white border border-[#333]" />
              <span className="ml-[12px] italic text-[11px] text-[#111]">背景</span>
              <svg width="10" height="12" viewBox="0 0 10 12" className="block ml-auto"><path d="M2.500 5V3.500a2.500 2.500 0 0 1 5 0V5" fill="none" stroke="#333" strokeWidth="1.300"/><rect x=".5" y="5.500" width="9" height="6" rx="1" fill="#ccc" stroke="#333"/></svg>
            </div>
          </div>
        </div>
        <div className="flex-1" />
        <div className="w-[14px] mr-[1px] bg-gradient-to-r from-[#d0d0d0] via-[#f2f2f2] to-[#e6e6e6]" />
      </div>
      <div className="relative h-[18px] shrink-0 bg-[#d6d6d6] border-t border-[#999] flex items-center justify-end pr-[30px] gap-[15px]">
        <svg width="14" height="8" viewBox="0 0 14 8" className="block"><path d="M5 1H3.500a3 3 0 0 0 0 6H6M9 1h1.500a3 3 0 0 1 0 6H8M4 4h6" fill="none" stroke="#777" strokeWidth="1.400"/></svg>
        <span className="font-['Liberation_Serif',serif] italic text-[13px] leading-none text-[#777] w-[12px]">fx</span>
        <svg width="12" height="10" viewBox="0 0 12 10" className="block"><rect width="12" height="10" fill="#333"/><circle cx="6" cy="5" r="2.500" fill="#ccc"/></svg>
        <svg width="13" height="12" viewBox="0 0 13 12" className="block"><circle cx="6" cy="6" r="5.500" fill="#eee" stroke="#333"/><path d="M6 .5A5.500 5.500 0 0 0 3 11c5-2 3-7 3-10.500z" fill="#222"/></svg>
        <svg width="13" height="11" viewBox="0 0 13 11" className="block"><path d="M.5 1.500h4.500l1 1.500h6.500v7.500H.5z" fill="#ddd" stroke="#333"/></svg>
        <NewDoc />
        <Trash />
        <Resize />
      </div>
    </div>
  );
}

function RightDock() {
  return (
    <div className="flex-1 flex flex-col border-l border-[#6b6b6b] min-w-0">
      <CollapseBar className="justify-between px-[4px]">
        <span className="ml-[22px]"><Tri2 left /></span>
        <Tri2 dark />
      </CollapseBar>
      <div className="flex flex-1 min-h-0">
        <IconColumn />
        <div className="flex-1 flex flex-col min-w-0">
          <ColorPanel />
          <BrushPanel />
          <LayersPanel />
        </div>
      </div>
    </div>
  );
}

function Taskbar() {
  const active = "rounded-[3px] border border-[#5f7790] bg-gradient-to-br from-[#e2ebf5] via-[#c6d6e8] to-[#aac0d8] shadow-[inset_0_0_2px_#fff]";
  return (
    <div className="h-[41px] shrink-0 flex items-center bg-gradient-to-r from-[#b6cfe8] via-[#a7c2dc] to-[#7d93ab] border-t border-[#6f7f8f] relative font-['Liberation_Sans',sans-serif]">
      <div className="relative overflow-hidden ml-[9px] w-[37px] h-[37px] rounded-full border-2 border-[#1f4f73] bg-[radial-gradient(circle_at_50%_75%,#5cc3e8,#0b4a78_70%)] flex items-center justify-center shrink-0">
        <svg width="22" height="20" viewBox="0 0 22 20" className="block"><path d="M1 3c3-2 6-2 9 0l-1 7c-3-2-6-2-9 0z" fill="#f25022"/><path d="M11 3c3 2 6 2 10 0l-1 7c-4 2-7 2-10 0z" fill="#8fc73e"/><path d="M0 11c3-2 6-2 9 0l-1 7c-3-2-6-2-9 0z" fill="#2f9fe0"/><path d="M10 11c3 2 6 2 10 0l-1 7c-4 2-7 2-10 0z" fill="#fcc30b"/></svg>
        <div className="absolute left-[2px] right-[2px] top-0 h-[15px] rounded-b-full bg-gradient-to-b from-white/60 to-white/10" />
      </div>
      <div className="ml-[27px] w-[32px] h-[32px] rounded-[6px] bg-white flex items-center justify-center shrink-0">
        <svg width="26" height="22" viewBox="0 0 26 22" className="block"><circle cx="7" cy="14" r="5" fill="none" stroke="#2f6fe0" strokeWidth="3.500"/><circle cx="19" cy="14" r="5" fill="none" stroke="#2f6fe0" strokeWidth="3.500"/><circle cx="13" cy="7" r="5" fill="none" stroke="#2f6fe0" strokeWidth="3.500"/><path d="M15 11l3 2" stroke="#e33" strokeWidth="2.500"/><rect x="10" y="20" width="6" height="2" fill="#e33"/></svg>
      </div>
      <div className={"ml-[17px] w-[59px] h-[38px] flex items-center justify-center shrink-0 " + active}>
        <div className="w-[32px] h-[32px] rounded-[3px] bg-gradient-to-b from-[#1e90ff] to-[#0a6fe0] flex items-center justify-center">
          <svg width="22" height="14" viewBox="0 0 22 14" className="block"><path d="M0 14V1c4-2 18-2 22 0v13h-5V5H5v9zM8 9h6v5H8z" fill="#fff"/></svg>
        </div>
      </div>
      <div className={"ml-[3px] w-[59px] h-[38px] flex items-center justify-center shrink-0 " + active}>
        <div className="w-[28px] h-[28px] bg-[#0e2a3c] border-[2px] border-[#2fb6ee] flex items-center justify-center text-[15px] font-bold text-[#33b8f0] leading-none">Ps</div>
      </div>
      <div className="ml-[19px] w-[28px] h-[28px] bg-[#3d1b06] border-[2px] border-[#f07a14] flex items-center justify-center text-[15px] font-bold text-[#f59a2e] leading-none shrink-0">Ai</div>
      <div className="ml-[33px] w-[28px] h-[28px] bg-[#12330a] border-[2px] border-[#5fe010] flex items-center justify-center text-[15px] font-bold text-[#7bf01e] leading-none shrink-0">Dw</div>
      <div className="ml-auto flex items-center shrink-0">
        <svg width="16" height="12" viewBox="0 0 16 12" className="block mr-[14px]"><path d="M8 0v3" stroke="#aaa"/><rect x=".5" y="3.500" width="15" height="8" rx="1" fill="#b9c3cc" stroke="#666"/><path d="M2 6h12M2 8h12" stroke="#666" strokeDasharray="1 1"/></svg>
        <svg width="15" height="17" viewBox="0 0 15 17" className="block mr-[9px]"><ellipse cx="7.500" cy="7" rx="5.500" ry="6.500" fill="#111"/><ellipse cx="7.500" cy="10" rx="3.500" ry="4.500" fill="#fff"/><path d="M3 8h9l-3 3H6z" fill="#e22"/><ellipse cx="4" cy="15.500" rx="3.500" ry="1.500" fill="#f90"/><ellipse cx="11" cy="15.500" rx="3.500" ry="1.500" fill="#f90"/></svg>
        <svg width="16" height="17" viewBox="0 0 16 17" className="block mr-[8px]"><path d="M8 0c2 1 5 2 8 2 0 7-2 12-8 15C2 14 0 9 0 2c3 0 6-1 8-2z" fill="#fff"/><path d="M8 2c2 1 4 1.500 6 1.500 0 6-2 9.500-6 12-4-2.500-6-6-6-12C4 3.500 6 3 8 2z" fill="#1e88e5"/><path d="M4 6l4 3 4-3v2l-4 3-4-3z" fill="#fff"/></svg>
        <svg width="17" height="17" viewBox="0 0 17 17" className="block mr-[6px]"><path d="M0 6h3l4-4v13l-4-4H0z" fill="#dfe5ea" stroke="#666" strokeWidth=".5"/><circle cx="12" cy="12" r="4.500" fill="#e03030" stroke="#fff"/><path d="M10 10l4 4M14 10l-4 4" stroke="#fff" strokeWidth="1.300"/></svg>
        <svg width="17" height="15" viewBox="0 0 17 15" className="block mr-[58px]"><rect x="4.500" y="3.500" width="12" height="9" fill="#9fb0bf" stroke="#fff"/><path d="M3 1v12M3 14h13" stroke="#fff" strokeWidth="1.500"/><path d="M0.500 1v3h5V1" fill="none" stroke="#fff"/></svg>
      </div>
      <div className="absolute right-[22px] top-0 w-[104px] flex flex-col items-end text-[12px] leading-[18px] text-white">
        <span className="pr-[34px] pt-[3px] text-[13px]">16:41</span>
        <span className={"whitespace-nowrap tracking-[.3px] " + cjk}>2018/5/21 星期一</span>
      </div>
      <div className="w-[14px] h-full shrink-0 bg-gradient-to-r from-[#5d7186] to-[#8197ae] border-l border-[#3c4c5c] ml-[66px] rounded-[1px]" />
    </div>
  );
}

export default function App() {
  return (
    <div className={"w-[1280px] h-[1024px] overflow-hidden flex flex-col bg-[#d6d6d6] " + cjk}>
      <MenuBar />
      <OptionsBar />
      <div className="flex-1 flex min-h-0">
        <LeftTools />
        <div className="w-[3px] shrink-0 bg-[#6f6f6f]" />
        <Doc />
        <RightDock />
      </div>
      <Taskbar />
    </div>
  );
}
